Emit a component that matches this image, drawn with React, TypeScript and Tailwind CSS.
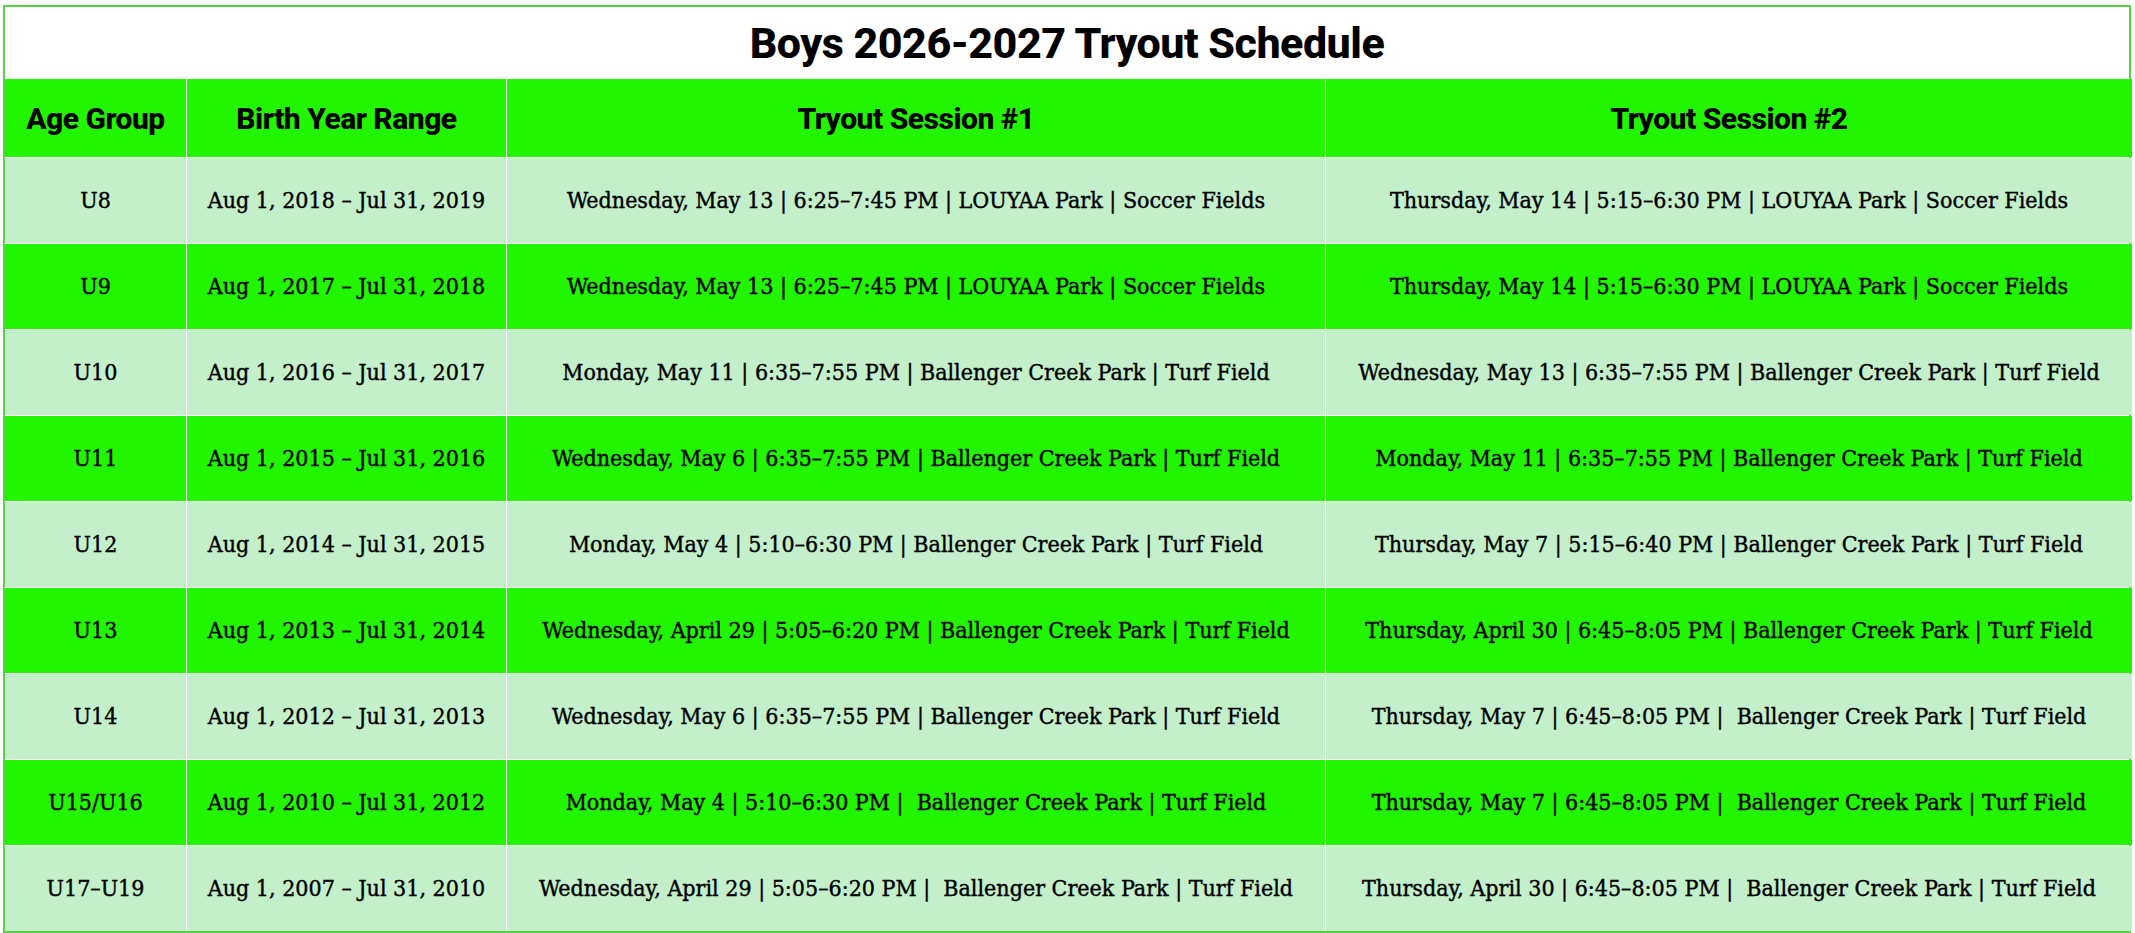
const rows = [
  {
    age: "U8",
    range: "Aug 1, 2018 – Jul 31, 2019",
    s1: "Wednesday, May 13 | 6:25–7:45 PM | LOUYAA Park | Soccer Fields",
    s2: "Thursday, May 14 | 5:15–6:30 PM | LOUYAA Park | Soccer Fields",
  },
  {
    age: "U9",
    range: "Aug 1, 2017 – Jul 31, 2018",
    s1: "Wednesday, May 13 | 6:25–7:45 PM | LOUYAA Park | Soccer Fields",
    s2: "Thursday, May 14 | 5:15–6:30 PM | LOUYAA Park | Soccer Fields",
  },
  {
    age: "U10",
    range: "Aug 1, 2016 – Jul 31, 2017",
    s1: "Monday, May 11 | 6:35–7:55 PM | Ballenger Creek Park | Turf Field",
    s2: "Wednesday, May 13 | 6:35–7:55 PM | Ballenger Creek Park | Turf Field",
  },
  {
    age: "U11",
    range: "Aug 1, 2015 – Jul 31, 2016",
    s1: "Wednesday, May 6 | 6:35–7:55 PM | Ballenger Creek Park | Turf Field",
    s2: "Monday, May 11 | 6:35–7:55 PM | Ballenger Creek Park | Turf Field",
  },
  {
    age: "U12",
    range: "Aug 1, 2014 – Jul 31, 2015",
    s1: "Monday, May 4 | 5:10–6:30 PM | Ballenger Creek Park | Turf Field",
    s2: "Thursday, May 7 | 5:15–6:40 PM | Ballenger Creek Park | Turf Field",
  },
  {
    age: "U13",
    range: "Aug 1, 2013 – Jul 31, 2014",
    s1: "Wednesday, April 29 | 5:05–6:20 PM | Ballenger Creek Park | Turf Field",
    s2: "Thursday, April 30 | 6:45–8:05 PM | Ballenger Creek Park | Turf Field",
  },
  {
    age: "U14",
    range: "Aug 1, 2012 – Jul 31, 2013",
    s1: "Wednesday, May 6 | 6:35–7:55 PM | Ballenger Creek Park | Turf Field",
    s2: "Thursday, May 7 | 6:45–8:05 PM |  Ballenger Creek Park | Turf Field",
  },
  {
    age: "U15/U16",
    range: "Aug 1, 2010 – Jul 31, 2012",
    s1: "Monday, May 4 | 5:10–6:30 PM |  Ballenger Creek Park | Turf Field",
    s2: "Thursday, May 7 | 6:45–8:05 PM |  Ballenger Creek Park | Turf Field",
  },
  {
    age: "U17–U19",
    range: "Aug 1, 2007 – Jul 31, 2010",
    s1: "Wednesday, April 29 | 5:05–6:20 PM |  Ballenger Creek Park | Turf Field",
    s2: "Thursday, April 30 | 6:45–8:05 PM |  Ballenger Creek Park | Turf Field",
  },
]

const headers = ["Age Group", "Birth Year Range", "Tryout Session #1", "Tryout Session #2"]

export default function App() {
  return (
    <div className="min-h-screen w-full bg-white">
      <div className="ml-[3px] pt-[5px]">
        <div className="w-[2128px] border-2 border-[#5ccf4a] bg-white">
          <div className="flex h-[72px] items-center justify-center font-['Roboto',sans-serif] text-[43px] font-extrabold tracking-[-0.5px] text-black">
            Boys 2026-2027 Tryout Schedule
          </div>
          <div className="grid grid-cols-[181px_319px_818px_806px] gap-px bg-white">
            {headers.map((h) => (
              <div
                key={h}
                className="flex h-[78px] items-center justify-center bg-[#22f500] font-['Roboto',sans-serif] text-[30px] font-extrabold tracking-[-0.5px] text-black"
              >
                {h}
              </div>
            ))}
            {rows.map((r, i) => {
              const bg = i % 2 === 0 ? "bg-[#c3efca]" : "bg-[#22f500]"
              return [r.age, r.range, r.s1, r.s2].map((cell, j) => (
                <div
                  key={`${i}-${j}`}
                  className={`flex h-[85px] items-center justify-center whitespace-pre ${bg} font-['DejaVu_Serif_Condensed','DejaVu_Serif',serif] text-[23px] text-black [-webkit-text-stroke:0.4px_black]`}
                >
                  {cell}
                </div>
              ))
            })}
          </div>
        </div>
      </div>
    </div>
  )
}
